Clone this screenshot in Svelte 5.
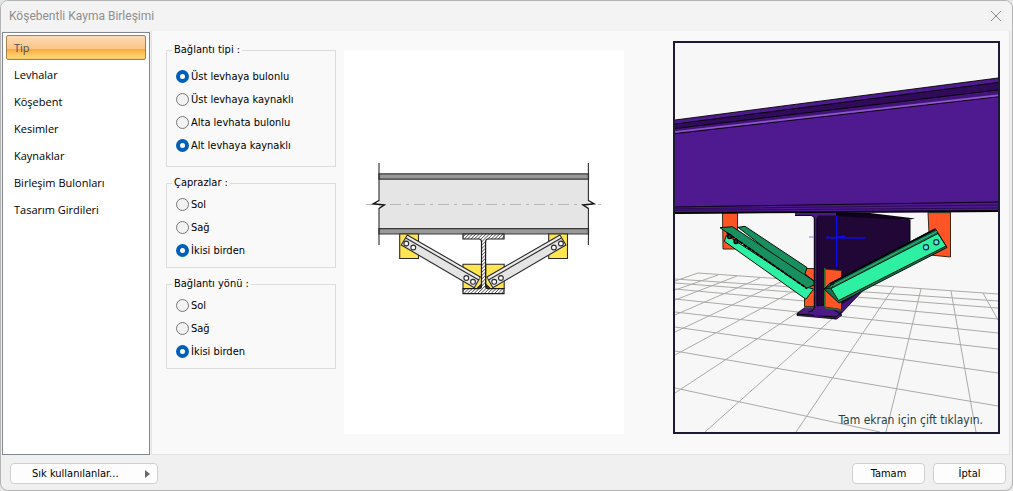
<script>
	const pages = [
		"Tip",
		"Levhalar",
		"Köşebent",
		"Kesimler",
		"Kaynaklar",
		"Birleşim Bulonları",
		"Tasarım Girdileri"
	];

	let active = $state("Tip");

	// the upper and lower plate are picked separately
	let upper = $state("bolted");
	let lower = $state("welded");
	let braces = $state("both");
	let direction = $state("both");

	const sides = [
		{ value: "left", text: "Sol" },
		{ value: "right", text: "Sağ" },
		{ value: "both", text: "İkisi birden" }
	];

	// floor grid of the 3d view: x1, y1, x2, y2
	const floor = [
		[698, 273, 998, 294],
		[675, 279, 998, 301],
		[675, 283, 998, 308],
		[675, 289, 998, 319],
		[675, 299, 998, 333],
		[675, 312, 998, 349],
		[675, 327, 998, 373],
		[675, 351, 998, 406],
		[675, 388, 880, 432],
		[675, 281, 698, 273],
		[675, 290, 718, 275],
		[675, 300, 737, 276],
		[675, 315, 760, 278],
		[675, 332, 787, 279],
		[675, 355, 812, 281],
		[675, 393, 842, 283],
		[705, 432, 870, 285],
		[796, 432, 894, 287],
		[886, 432, 921, 289],
		[976, 432, 951, 291],
		[998, 320, 983, 293]
	];
</script>

<div class="dialog">
	<header>
		<h1>Köşebentli Kayma Birleşimi</h1>
		<button class="close" aria-label="Kapat">
			<svg width="12" height="12" viewBox="0 0 12 12">
				<path d="M1 1 11 11M11 1 1 11" stroke="#8c8c8c" fill="none" />
			</svg>
		</button>
	</header>

	<main>
		<nav>
			{#each pages as page}
				<button class:active={page === active} onclick={() => (active = page)}>{page}</button>
			{/each}
		</nav>

		<section class="page">
			<form class="options">
				<fieldset class="tall">
					<legend>Bağlantı tipi :</legend>
					<label><input type="radio" name="upper" value="bolted" bind:group={upper} />Üst levhaya bulonlu</label>
					<label><input type="radio" name="upper" value="welded" bind:group={upper} />Üst levhaya kaynaklı</label>
					<label><input type="radio" name="lower" value="bolted" bind:group={lower} />Alta levhata bulonlu</label>
					<label><input type="radio" name="lower" value="welded" bind:group={lower} />Alt levhaya kaynaklı</label>
				</fieldset>

				<fieldset>
					<legend>Çaprazlar :</legend>
					{#each sides as side}
						<label><input type="radio" name="braces" value={side.value} bind:group={braces} />{side.text}</label>
					{/each}
				</fieldset>

				<fieldset>
					<legend>Bağlantı yönü :</legend>
					{#each sides as side}
						<label><input type="radio" name="direction" value={side.value} bind:group={direction} />{side.text}</label>
					{/each}
				</fieldset>
			</form>

			<div class="drawing">
				<svg viewBox="344 50 280 384">
					<defs>
						<pattern id="hatch" width="2.4" height="2.4" patternUnits="userSpaceOnUse" patternTransform="rotate(45)">
							<rect width="2.4" height="2.4" fill="#fff" />
							<path d="M0 0V2.4" stroke="#444" stroke-width="1.4" />
						</pattern>
						<!-- plate and brace on one side -->
						<g id="brace" stroke="#2a2a2a" stroke-width="1.1">
							<path d="M399.7 234h18.8v24.5h-18.8zM463 264.3h18.5v24.4H463z" fill="#ffe54f" />
							<path d="M407.3 235 480.3 277 474.3 287.7 401.3 245z" fill="#e4e4e4" />
							<path d="M405.8 238 478.8 280" fill="none" />
							<path d="M407 236.6 479.6 278.4" fill="none" stroke="#f2f2f2" stroke-width=".8" />
							<g fill="#fff">
								<circle cx="406.3" cy="243.5" r="2.4" />
								<circle cx="413.3" cy="247.5" r="2.4" />
								<circle cx="466.3" cy="278" r="2.4" />
								<circle cx="473" cy="281.8" r="2.4" />
							</g>
							<path d="M477 288.5 481.5 284V288.7z" fill="#333" />
						</g>
					</defs>

					<path d="M379 176H588.5V232H379z" fill="#e5e5e5" />
					<g fill="#999" stroke="#3a3a3a" stroke-width="1.2">
						<path d="M379 173.8H588.5V179.2H379zM379 228.6H588.5V234H379z" />
					</g>
					<path d="M366 204.5H601" stroke="#b0b0b0" stroke-width=".9" stroke-dasharray="11 5 3 5" />
					<path d="M379 163V201M379 208V245M588.4 163V201M588.4 208V245" stroke="#2a2a2a" stroke-width="1.1" />
					<path d="M379 200.5 373.3 203.7 384.3 205 379 208.5M588.4 200.5 594 203.7 583 205 588.4 208.5" fill="none" stroke="#111" stroke-width="1.4" />

					<use href="#brace" />
					<use href="#brace" transform="matrix(-1 0 0 1 967.2 0)" />
					<path
						d="M463 234H504V239H488Q485.6 239 485.6 242V286Q485.6 288.7 488 288.7H504V293.7H463V288.7H479Q481.5 288.7 481.5 286V242Q481.5 239 479 239H463z"
						fill="url(#hatch)" stroke="#1c1c1c" stroke-width="1.2" />
				</svg>
			</div>

			<div class="view">
				<svg viewBox="675 43 323 389" preserveAspectRatio="xMidYMid slice">
					<rect x="675" y="43" width="323" height="389" fill="#f7f7f7" />
					<g stroke="#a9aaa7">
						{#each floor as [x1, y1, x2, y2]}
							<line {x1} {y1} {x2} {y2} />
						{/each}
					</g>

					<!-- column -->
					<path d="M867 286 836 319 824 316 824 300 850 286z" fill="#43177b" stroke="#000" stroke-width=".8" />
					<path d="M816 214 836 213 910 220V244L868 287 838 307 816 310z" fill="#200735" />
					<path d="M830 212 870 213 915 218.5 908 220 836 216z" fill="#0d0219" />
					<path d="M910 220V244" stroke="#000" />
					<path d="M806 307 826 305 842 315 836.5 319 797 315.5V313.5z" fill="#4c1b88" stroke="#000" stroke-width=".8" />
					<path d="M797 314 836 317 842 312" fill="none" stroke="#000" />

					<!-- plates -->
					<g stroke="#3b2615">
						<path d="M722.5 213H737.5V249H723zM804.5 268.5H815V306.5H804.5zM824.7 269 841.5 270.5V309.5L824.7 307z" fill="#ff5526" />
						<path d="M928 212H950.5V257L930 255z" fill="#ff5526" />
					</g>
					<path d="M824.7 268V307M928 212.5H950" stroke="#2c6a28" stroke-width="1.4" />
					<path d="M804.5 307.5H814M825 308 841 310" stroke="#2c6a28" stroke-width="1.4" />
					<path d="M795 212H836V215.5H819Q817 215.5 817 219V306Q817 310 823 311L833 315 814 316V219Q814 215.5 810 215.5H795z" fill="#4a1b83" />
					<path d="M795 215.5H810Q814.3 215.5 814.3 219V308Q813 312 808 312M817 218V306" fill="none" stroke="#000" />

					<!-- left brace -->
					<g stroke="#04150c">
						<path d="M738 227.3 745 226.3 807 267.5 805 274 814 281V286z" fill="#198e5f" />
						<path d="M726.5 235 724.3 241.3 806 299.3 813.5 289 806 287z" fill="#2df0a2" />
						<path d="M720 227.7 732.5 226.7 814 281V285L806.7 288.3z" fill="#198e5f" />
					</g>
					<path d="M727 233 807 288.5" stroke="#000" stroke-width="1.8" stroke-dasharray="4 1" />
					<g fill="#0d4a42" stroke="#000" stroke-width="1.4">
						<circle cx="729.5" cy="236.5" r="2" />
						<circle cx="736" cy="241.5" r="2" />
					</g>

					<!-- right brace -->
					<g stroke="#04150c">
						<path d="M824 289 830 283.3 935.3 228.7 947 247.5 839 303z" fill="#117650" />
						<path d="M831 288.5 938 233.5 946 246 838.5 300.5z" fill="#2df0a2" />
						<path d="M824 289 834 283.5 831.5 288z" fill="#117650" />
					</g>
					<path d="M830 284 935 229.5" stroke="#000" stroke-width="1.8" />
					<path d="M831 286.5 937 231.5" stroke="#38cf94" stroke-width=".8" />
					<g fill="#50e9f2" stroke="#0a322c" stroke-width="1.2">
						<circle cx="926" cy="247.3" r="2.6" />
						<circle cx="936.3" cy="242.3" r="2.6" />
					</g>

					<!-- axes -->
					<path d="M836.6 216V267M826 237.7 865 238M827 236.5 833 239M836 237.5 845 236" fill="none" stroke="#0c0cf0" stroke-width="1.5" />
					<path d="M809 237H814" stroke="#a6a6f5" stroke-width="1.6" />

					<!-- main beam -->
					<path d="M675 120 998 78V212L675 213.5z" fill="#4f198f" />
					<path d="M675 124 998 82.5V90L675 128.5z" fill="#2f0b59" />
					<path d="M675 128.5 998 90V94L675 131z" fill="#421477" />
					<g fill="none" stroke="#000" stroke-width="1.1">
						<path d="M675 120 998 78M675 124 998 82.5M675 128.5 998 90M675 133.6 998 96.8M675 207 998 202" stroke-width=".9" />
						<path d="M675 208.7 998 205M675 210.3 998 208" stroke="#2c0a56" />
						<path d="M675 213 998 211" stroke-width="1.8" />
					</g>
					<path d="M675 132 998 95.3" stroke="#8e57c9" stroke-width="1.7" />
				</svg>
				<p>Tam ekran için çift tıklayın.</p>
			</div>
		</section>
	</main>

	<footer>
		<button class="favorites">
			<span>Sık kullanılanlar...</span>
			<svg width="5" height="8" viewBox="0 0 5 8"><path d="M0 0 5 4 0 8z" fill="#666" /></svg>
		</button>
		<button>Tamam</button>
		<button>İptal</button>
	</footer>
</div>

<style>
	:global(body) {
		background: #e6e6e6;
	}

	.dialog {
		display: flex;
		flex-direction: column;
		box-sizing: border-box;
		min-height: 100vh;
		border: 1px solid #b4b4b4;
		border-radius: 8px;
		background: #f0f0f0;
		overflow: hidden;
		color: #000;
		font-family: "DejaVu Sans Condensed", "Noto Sans", sans-serif;
		font-size: 11px;
		line-height: 14px;
	}

	header {
		display: flex;
		align-items: center;
		justify-content: space-between;
		height: 30px;
		padding: 0 10px 0 8px;
		background: #f3f3f3;
	}

	h1 {
		margin: 0;
		color: #8f8f8f;
		font: 400 12px/16px Roboto, "Noto Sans", sans-serif;
	}

	button {
		font: inherit;
		color: inherit;
	}

	.close {
		display: flex;
		padding: 0;
		border: 0;
		background: none;
	}

	main {
		flex: 1;
		display: flex;
		gap: 1px;
		padding: 0 2px 0 1px;
	}

	nav {
		display: flex;
		flex-direction: column;
		gap: 2px;
		box-sizing: border-box;
		width: 148px;
		margin-top: 1px;
		padding: 2px 3px;
		border: 1px solid #828790;
		background: #fff;
	}

	nav button {
		height: 25px;
		padding: 0 7px;
		border: 1px solid transparent;
		border-radius: 2px;
		background: none;
		font-family: "Open Sans", "Noto Sans", sans-serif;
		text-align: left;
	}

	nav button.active {
		border-color: #a2804c;
		background: linear-gradient(#fbdcb8, #fbc586 55%, #fbab3f 58%, #fdd673 92%, #fbc869);
		color: #4e4a52;
	}

	.page {
		flex: 1;
		display: flex;
		align-items: flex-start;
		gap: 8px;
		padding: 10px 9px 20px 14px;
		border: 1px solid #e3e3e3;
		border-top: 0;
		background: #f9f9f9;
	}

	.options {
		display: flex;
		flex-direction: column;
		gap: 9px;
		width: 170px;
		padding-top: 2px;
	}

	fieldset {
		min-width: 0;
		margin: 0;
		padding: 3px 9px 5px 5px;
		border: 1px solid #dcdcdc;
	}

	fieldset.tall {
		padding-top: 8px;
		padding-bottom: 9px;
	}

	legend {
		padding: 0 2px;
	}

	label {
		display: flex;
		align-items: center;
		gap: 2px;
		height: 23px;
		margin-left: 4px;
	}

	input {
		appearance: none;
		box-sizing: border-box;
		width: 13px;
		height: 13px;
		margin: 0;
		border: 1px solid #777;
		border-radius: 50%;
		background: #f3f3f3;
	}

	input:checked {
		border: 4px solid #005fb8;
		background: #fff;
	}

	.drawing {
		width: 280px;
		margin-top: 9px;
		background: #fff;
	}

	.drawing svg,
	.view svg {
		display: block;
		width: 100%;
	}

	.view {
		position: relative;
		width: 323px;
		margin-left: auto;
		border: 2px solid #1b1b35;
	}

	.view p {
		position: absolute;
		right: 15px;
		bottom: 5px;
		margin: 0;
		color: #2b3f3f;
		font-family: "DejaVu Sans Condensed", sans-serif;
		font-size: 12px;
	}

	footer {
		display: flex;
		gap: 8px;
		padding: 8px 6px 6px 9px;
	}

	footer button {
		width: 73px;
		height: 21px;
		padding: 0;
		border: 1px solid #cfcfcf;
		border-radius: 4px;
		background: #fdfdfd;
	}

	footer .favorites {
		display: flex;
		align-items: center;
		justify-content: space-between;
		width: 148px;
		margin-right: auto;
		padding: 0 7px 0 21px;
	}
</style>
